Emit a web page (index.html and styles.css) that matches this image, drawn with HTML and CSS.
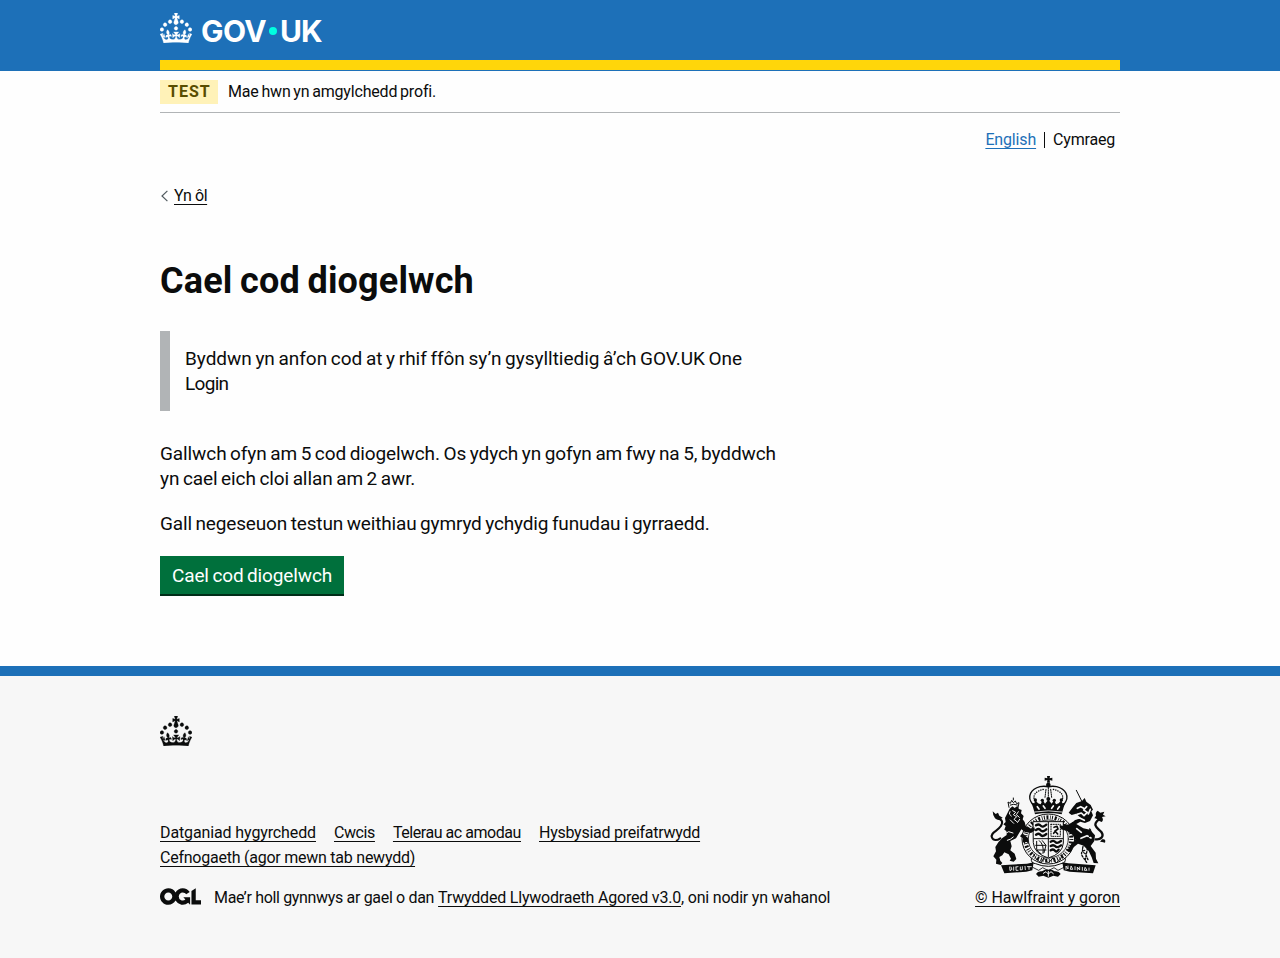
FILE: index.html
```html
<!DOCTYPE html>
<html lang="cy">
<head>
<meta charset="utf-8">
<title>Cael cod diogelwch - GOV.UK One Login</title>
<link rel="stylesheet" href="styles.css">
</head>
<body>
<svg class="defs" width="0" height="0" aria-hidden="true">
  <symbol id="crown" viewBox="0 0 32 30"><path d="M22.6 10.4c-1 .4-2-.1-2.4-1-.4-.9.1-2 1-2.4.9-.4 2 .1 2.4 1s-.1 2-1 2.4m-5.9 6.7c-.9.4-2-.1-2.4-1-.4-.9.1-2 1-2.4.9-.4 2 .1 2.4 1s-.1 2-1 2.4m10.8-3.7c-1 .4-2-.1-2.4-1-.4-.9.1-2 1-2.4.9-.4 2 .1 2.4 1s0 2-1 2.4m3.3 4.8c-1 .4-2-.1-2.4-1-.4-.9.1-2 1-2.4.9-.4 2 .1 2.4 1s-.1 2-1 2.4M17 4.7l2.3 1.2V2.5l-2.3.7-.2-.2.9-3h-3.4l.9 3-.2.2c-.1.1-2.3-.7-2.3-.7v3.4L15 4.7c.1.1.1.2.2.2l-1.3 4c-.1.2-.1.4-.1.6 0 1.1.8 2 1.9 2.2h.7c1-.2 1.9-1.1 1.9-2.1 0-.2 0-.4-.1-.6l-1.3-4c-.1-.2 0-.2.1-.3m-7.6 5.7c.9.4 2-.1 2.4-1 .4-.9-.1-2-1-2.4-.9-.4-2 .1-2.4 1s0 2 1 2.4m-5 3c.9.4 2-.1 2.4-1 .4-.9-.1-2-1-2.4-.9-.4-2 .1-2.4 1s.1 2 1 2.4m-3.2 4.8c.9.4 2-.1 2.4-1 .4-.9-.1-2-1-2.4-.9-.4-2 .1-2.4 1s0 2 1 2.4m14.8 11c4.4 0 8.6.3 12.3.8 1.1-4.5 2.4-7 3.7-8.8l-2.5-.9c.2 1.3.3 1.9 0 2.7-.4-.4-.8-1.1-1.1-2.3l-1.2 4c.7-.5 1.3-.8 2-.9-1.1 2.5-2.6 3.1-3.5 3-1.1-.2-1.7-1.2-1.5-2.1.3-1.2 1.5-1.5 2.1-.1 1.1-2.3-.8-3-2-2.3 1.9-1.9 2.1-3.5.6-5.6-2.1 1.6-2.1 3.2-1.2 5.5-1.2-1.4-3.2-.6-2.5 1.6.9-1.4 2.1-.5 1.9.8-.2 1.1-1.7 2.1-3.5 1.9-2.7-.2-2.9-2.1-2.9-3.6.7-.1 1.9.5 2.9 1.9l.4-4.3c-1.1 1.1-2.1 1.4-3.2 1.4.4-1.2 2.1-3 2.1-3h-5.4s1.7 1.9 2.1 3c-1.1 0-2.1-.2-3.2-1.4l.4 4.3c1-1.4 2.2-2 2.9-1.9-.1 1.5-.2 3.4-2.9 3.6-1.9.2-3.4-.8-3.5-1.9-.2-1.3 1-2.2 1.9-.8.7-2.3-1.2-3-2.5-1.6.9-2.2.9-3.9-1.2-5.5-1.5 2-1.3 3.7.6 5.6-1.2-.7-3.1 0-2 2.3.6-1.4 1.8-1.1 2.1.1.2.9-.3 1.9-1.5 2.1-.9.2-2.4-.5-3.5-3 .6 0 1.2.3 2 .9l-1.2-4c-.3 1.1-.7 1.9-1.1 2.3-.3-.8-.2-1.4 0-2.7l-2.9.9C1.3 23 2.6 25.5 3.7 30c3.7-.5 7.9-.8 12.3-.8"/></symbol>
</svg>

<header class="header">
  <div class="container">
    <a class="brand" href="#">
      <svg class="crown" fill="currentColor" aria-hidden="true"><use href="#crown"/></svg>
      <span class="wordmark"><span class="gov">GOV</span><i class="dot"></i><span class="uk">UK</span></span>
    </a>
    <div class="header-bar"></div>
  </div>
</header>

<div class="container">
  <div class="phase"><strong class="tag">TEST</strong><span class="phase-text">Mae hwn yn amgylchedd profi.</span></div>
  <nav class="languages"><a class="english" href="#">English</a><span class="welsh">Cymraeg</span></nav>
  <div class="back-row">
    <svg class="chevron" width="8" height="12" viewBox="0 0 8 12" fill="none" stroke="#505a5f" stroke-width="1.2" aria-hidden="true"><path d="M7.4.9 2 6l5.4 5.1"/></svg>
    <a class="link back" href="#">Yn ôl</a>
  </div>
  <main class="main">
    <h1 class="title">Cael cod diogelwch</h1>
    <div class="inset">Byddwn yn anfon cod at y rhif ffôn sy’n gysylltiedig â’ch GOV.UK One<br><span class="login">Login</span></div>
    <p class="para">Gallwch ofyn am 5 cod diogelwch. Os ydych yn gofyn am fwy na 5, byddwch<br>yn cael eich cloi allan am 2 awr.</p>
    <p class="para texts">Gall negeseuon testun weithiau gymryd ychydig funudau i gyrraedd.</p>
    <button class="button" type="button">Cael cod diogelwch</button>
  </main>
</div>

<footer class="footer">
  <div class="container">
    <svg class="crown footer-crown" fill="currentColor" aria-hidden="true"><use href="#crown"/></svg>
    <div class="meta">
      <div class="meta-main">
        <div class="links">
          <a class="link l-access" href="#">Datganiad hygyrchedd</a>
          <a class="link l-cookies" href="#">Cwcis</a>
          <a class="link l-terms" href="#">Telerau ac amodau</a>
          <a class="link l-privacy" href="#">Hysbysiad preifatrwydd</a>
          <a class="link l-support" href="#">Cefnogaeth (agor mewn tab newydd)</a>
        </div>
        <div class="licence">
          <svg class="ogl" width="41" height="17" viewBox="0 0 483.2 195.7" fill="currentColor" aria-hidden="true"><path d="M421.5 142.8V.1l-50.7 32.3v161.1h112.4v-50.7zm-122.3-9.6A47.12 47.12 0 0 1 221 97.8c0-26 21.1-47.1 47.1-47.1 16.7 0 31.4 8.7 39.7 21.8l42.7-27.2A97.63 97.63 0 0 0 268.1 0c-36.5 0-68.3 20.1-85.1 49.7A98 98 0 0 0 97.8 0C43.9 0 0 43.9 0 97.8s43.9 97.8 97.8 97.8c36.5 0 68.3-20.1 85.1-49.7a97.76 97.76 0 0 0 149.6 25.4l19.4 22.2h3v-87.8h-80l24.3 27.5zM97.8 145c-26 0-47.1-21.1-47.1-47.1s21.1-47.1 47.1-47.1 47.1 21.1 47.1 47.1S123.8 145 97.8 145"/></svg>
          <span class="licence-text"><span class="lic-a">Mae’r holl gynnwys ar gael o dan</span> <a class="link lic-b" href="#">Trwydded Llywodraeth Agored v3.0</a><span class="lic-c">, oni nodir yn wahanol</span></span>
        </div>
      </div>
      <div class="copyright">
        <svg class="arms" width="126" height="102" viewBox="15 18 378 306" fill="none" stroke="#0b0c0c" stroke-linecap="round" stroke-linejoin="round" aria-hidden="true">
          <!-- imperial crown -->
          <g fill="#0b0c0c" stroke="none">
            <path d="M201 18h9l-1 7 8-2v9l-8-2 1 8h-9l1-8-8 2v-9l8 2z"/><circle cx="205" cy="45" r="7"/>
            <path d="M159 112l-5-14 9 2 3-10 8 10 8 3 6-13 7 11 10-12 10 12 7-11 6 13 8-3 8-10 3 10 9-2-5 14-6 21q-40-8-80 0z"/>
            <circle cx="166" cy="90" r="5"/><circle cx="187" cy="91" r="5"/><circle cx="205" cy="87" r="6"/><circle cx="223" cy="91" r="5"/><circle cx="244" cy="90" r="5"/>
          </g>
          <path d="M158 103c-19-24-5-46 22-53 10-2 20-1 25 1 5-2 15-3 25-1 27 7 41 29 22 53" stroke-width="4"/>
          <path d="M165 92c-10-17 5-30 26-34M245 92c10-17-5-30-26-34" stroke-width="4" stroke-dasharray="1 6"/>
          <path d="M205 53v30M198 58l-3 24M212 58l3 24" stroke-width="3" stroke-dasharray="4 3"/>
          <path d="M164 126q41-7 82 0" stroke="#f7f7f7" stroke-width="2.5"/>
          <path d="M172 110l5 7M190 108l5 7M215 115l5-7M233 117l5-7" stroke="#f7f7f7" stroke-width="5"/>
          <!-- garter and shield -->
          <ellipse cx="205" cy="207" rx="79" ry="75" fill="#f7f7f7" stroke-width="3"/>
          <ellipse cx="205" cy="207" rx="69" ry="65" stroke-width="12" stroke-dasharray="3 5 6 5 2 4" stroke-linecap="butt"/>
          <ellipse cx="205" cy="207" rx="60" ry="57" stroke-width="2.5"/>
          <path d="M160 155h90v64q-2 32-45 45-43-13-45-45z" fill="#f7f7f7" stroke-width="3"/>
          <path d="M205 157v104M162 206h86" stroke-width="3"/>
          <path d="M168 166q9-6 14 1t17-3M168 180q9-6 14 1t17-3M168 194q9-6 14 1t17-3M212 215q9-5 14 1t17-3M212 228q9-5 14 1t17-3M212 241q8-5 13 1t11-3" stroke-width="7"/>
          <path d="M213 163h28v36h-28z" stroke-width="3" stroke-dasharray="3 4"/>
          <path d="M222 172l9-3 3 8-9 6 8 9M221 190l8-10" stroke-width="5"/>
          <path d="M170 214v24q5 10 14 14M178 212q15 12 11 38M187 212l11 14-6 22M167 226h30M172 240h26" stroke-width="3"/>
          <!-- lion -->
          <g fill="#0b0c0c" stroke="none">
            <path d="M89 116l8-7 7 5 8-6 5 9 8 3-2 10 8 8-3 10 6 8 3 12 16 8 10-4 2 9-12 8-18-3-11-8-7 12-9 15-17 8 4 16-4 12 13 10 5 16-8 8-12-3 4-6-7-13-13-6-6 9-9 5 3 11 6 7-5 6-14-4 1-12-9-10 8-15-2-13 9-14 11-12 14-10-1-12-6-4 4-11-7-5 7-7-2-12z"/>
            <path d="M45 145q-7-10-7-21l9 8 7-4 4 9 10 6-10 8zM127 190l17 14 3 18-10-8-3 8-6-8 1-9-9-6z"/>
          </g>
          <path d="M50 145q25 4 12 24c-8 14-33 19-26 34 4 10 16 8 25 2" stroke-width="6"/>
          <path d="M87 112l-3-16 7 4 4-9 5 7 6-5 4 8 7-3-3 15M91 105q10-5 21 0M100 90v-6" stroke-width="3"/>
          <path d="M98 122l9 5-7 7 10 6-8 8 10 8M115 125l-6 9 9 8M90 125l-2 7 6 6M91 150l10 10M119 148l-6 9M72 193l14-8 13 4M82 211q10-2 18-10" stroke="#f7f7f7" stroke-width="3"/>
          <!-- unicorn -->
          <path d="M289 61l20 40" stroke-width="3"/>
          <g fill="#0b0c0c" stroke="none">
            <path d="M279 111l10-12 17-6 8-9 5 11 13 10 7 14-5 5 5 12-9 17-15 6-14-4-12 7 21 13 20 4 15 17-2 17-11 15 15 20 1 18 7 14-14-1-6-17-9-19-15-16-17-6-15 12-8 15-9-7 12-20 12-12-8-14-17-12-18-5-5-12 16 2 17-5 15-14 16-6-14-12-13 4-9-7z"/>
            <path d="M358 153q-9-10-15-8l5-8q-3-10 5-15l8 6 12-3-4 9 8 5-11 2q6 9-1 15zM366 208q13-3 9 10-10-3-15-3zM248 161l16 3 15-9 8 12-18 5-17-2z"/>
          </g>
          <path d="M356 149c-22 18-2 25 8 37 10 14-3 24-17 22" stroke-width="7"/>
          <path d="M292 115l10-5 9 5M320 110l-9 10 11 7-10 10M291 133l13-4 8 8M331 118l-6 14M285 147l14-3 14 7M306 163l20 5 12 14M290 176l14 11M303 205l18-8 12 7" stroke="#f7f7f7" stroke-width="5"/>
          <path d="M329 177q11 12-4 26l-14 22q-9 20 5 26l8 18M314 241q-15 4-6 19l12 17M323 205v27l-8 41" stroke-width="4" stroke-dasharray="5 5"/>
          <!-- motto scroll -->
          <path d="M63 286l78-5 20-4-4 24-18 4-66 5z" fill="#0b0c0c" stroke="none"/>
          <path d="M347 286l-82-6-18-3 4 24 18 4 70 5z" fill="#0b0c0c" stroke="none"/>
          <path d="M89 291l1 11 6-4-3-7M101 291v10M108 291v10h6M108 291l6-1M121 291v9l6-1v-9M135 289l1 10M142 290h12M147 290v8M258 298v-10l6 9v-9M273 289l-2 9h6zM285 290v9M292 300v-9l7 9v-9M307 292v9M315 293l-2 8h7zM327 294v7" stroke="#f7f7f7" stroke-width="2.6"/>
          <path d="M154 266q-2 14 13 15 18 8 38 8t38-8q15-1 13-15M169 267l14 12 8-15 14 15 14-15 9 15 14-12" stroke-width="3"/>
          <path d="M160 251q6 7 9 17M250 251q-6 7-9 17M158 292l18 9 12-8 17 9 17-9 12 8 18-9" stroke-width="2.5"/>
          <path d="M168 312q5-10 18-8 8-6 19-5 12-1 19 5 13-2 18 8l-8 8-14-3-15 6-15-6-14 3z" fill="#0b0c0c" stroke="none"/>
          <path d="M190 310l8-5 7 7 8-7 7 6M205 304v15" stroke="#f7f7f7" stroke-width="3"/>
        </svg>
        <a class="link copy" href="#">© Hawlfraint y goron</a>
      </div>
    </div>
  </div>
</footer>
</body>
</html>
```
FILE: styles.css
```css
* { box-sizing: border-box; }
body { margin: 0; background: #fefefe; color: #0b0c0c; font: 16px/20px Roboto, sans-serif; }
.defs { display: block; height: 0; }
.container { width: 960px; margin: 0 auto; }
.link { color: inherit; text-decoration: underline 1px; text-underline-offset: 3px; text-decoration-skip-ink: none; white-space: nowrap; }
.crown { display: block; width: 32px; height: 30px; stroke: currentColor; stroke-width: 0.3px; }

.header { height: 71px; background: #1d70b8; }
.brand { display: flex; height: 60px; padding-top: 13px; gap: 9px; color: #fff; text-decoration: none; }
.wordmark { display: flex; height: 36px; align-items: center; font: 700 30px/36px Inter, sans-serif; }
.gov { letter-spacing: -0.6px; }
.uk { margin-left: -1px; letter-spacing: -1px; }
.dot { width: 8px; height: 8px; margin: 0 4px 0 3px; border-radius: 50%; background: #00ffe0; }
.header-bar { height: 10px; background: #ffd60a; }

.phase { display: flex; height: 42px; padding-top: 9px; gap: 10px; border-bottom: 1px solid #b1b4b6; }
.tag { width: 58px; height: 24px; padding-left: 8px; background: #fff2b8; color: #594d00; font-weight: 700; line-height: 24px; letter-spacing: 1px; }
.phase-text { line-height: 23px; letter-spacing: -0.18px; word-spacing: -1px; }
.languages { display: flex; justify-content: flex-end; height: 54px; padding: 18px 5px 0 0; line-height: 18px; }
.english { padding-right: 8px; height: 18px; color: #1d70b8; letter-spacing: -0.15px; text-underline-offset: 3px; text-decoration-thickness: 1px; text-decoration-skip-ink: none; }
.welsh { height: 16px; margin-top: 1px; padding-left: 8px; border-left: 1px solid #0b0c0c; letter-spacing: -0.2px; line-height: 16px; }
.back-row { display: flex; align-items: center; height: 20px; margin-top: 19px; gap: 6px; }
.back { letter-spacing: -0.4px; }
.main { padding-top: 55px; height: 460px; font-size: 19px; line-height: 25px; }
.title { margin: 0 0 30px; font-size: 36px; line-height: 40px; font-weight: 700; letter-spacing: 0.16px; word-spacing: -1.5px; }
.inset { width: 630px; height: 80px; margin-bottom: 30px; padding: 15px; border-left: 10px solid #b1b4b6; letter-spacing: -0.03px; word-spacing: -1px; white-space: nowrap; }
.login { letter-spacing: -0.7px; }
.para { margin: 0 0 20px; letter-spacing: -0.1px; word-spacing: -1px; white-space: nowrap; }
.texts { letter-spacing: -0.15px; }
.button { display: block; width: 184px; height: 40px; padding: 0 0 1px; border: 0; background: #00703c; box-shadow: inset 0 -2px 0 #002d18; color: #fff; font: 19px/19px Roboto, sans-serif; letter-spacing: -0.14px; word-spacing: -1px; }

.footer { height: 292px; padding-top: 40px; border-top: 10px solid #1d70b8; background: #f7f7f7; }
.meta { display: flex; justify-content: space-between; align-items: flex-end; margin-top: 30px; }
.links { display: flex; flex-wrap: wrap; width: 640px; column-gap: 18px; row-gap: 5px; margin-bottom: 20px; }
.licence { display: flex; gap: 13px; height: 20px; white-space: nowrap; }
.ogl { margin-top: 0; }
.copyright { display: flex; flex-direction: column; align-items: center; gap: 10px; }
.arms { display: block; }
.l-access { letter-spacing: -0.12px; }
.l-cookies { letter-spacing: -0.4px; }
.l-terms { letter-spacing: -0.45px; }
.l-privacy { letter-spacing: -0.26px; }
.l-support { letter-spacing: -0.24px; }
.lic-a { letter-spacing: -0.33px; }
.lic-b, .lic-c { letter-spacing: -0.2px; }
.copy { letter-spacing: -0.09px; }
```
